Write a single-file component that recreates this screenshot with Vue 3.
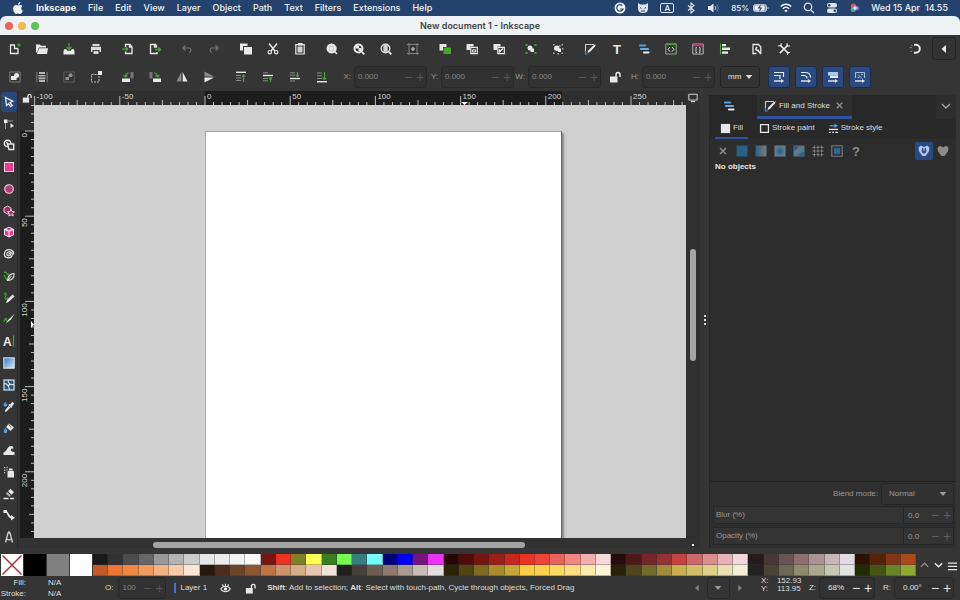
<script setup>
import { ref } from 'vue'

const W = '#e8e8e8'
const G = '#43a832'
const B = '#4f9fd8'
const P = '#e83e8c'

const line = (d, c = W, w = 1) =>
  `<path d="${d}" fill="none" stroke="${c}" stroke-width="${w}"/>`
const fill = (d, c = W) => `<path d="${d}" fill="${c}"/>`

const icons = {
  new: line('M6 2H1.5v8.5h7.5V5.5M5.5 2v3.5H9', W, 1.3) + fill('M9.5 0h1v1.5H12v1h-1.5V4h-1V2.500H8v-1h1.500z', G),
  open: fill('M0 1.500h4l1 1.300h5v1.700H3L1.500 8.500 0 10z') + fill('M3.200 5.300H12L11 11H.8z'),
  save: line('M6 0v6M3.500 4 6 6.500 8.500 4', G, 1.2) + fill('M1.500 6h1.700l1 1.800h3.600l1-1.800h1.700L11.500 8v3.500H.5V8z'),
  print: fill('M2.500 1h7v2h-7zM1 3.700h10V9H9.500V7h-7v2H1zM3.500 8h5v3h-5z', '#dcdcdc'),
  import: line('M3.500 4V1.500H8L10 4v6.500H3.500V8.500M7.500 1.500V4H10', W, 1.3) + line('M0 6.200h5M3.500 4l2.300 2.200L3.500 8.400', G, 1.3),
  export: line('M8 3.500 6.500 1.500h-5v9H8V9M5.500 1.500V4H8', W, 1.3) + line('M6 6.500h5M9.300 4.200l2.200 2.300-2.200 2.300', G, 1.3),
  undo: line('M4.500 2.500 2 5l2.500 2.500M2 5h6c2.500 0 2.500 4 0 4.500', '#757575', 1.2),
  redo: line('M7.500 2.500 10 5 7.500 7.500M10 5H4C1.500 5 1.500 9 4 9.500', '#757575', 1.2),
  copy: fill('M0 .5h7.500V3H3v4.500H0z') + fill('M4 4h8v7.500H4z'),
  cut: line('M2 .5 8 8M10 .5 4 8', W, 1.5) + line('M4.500 9.200a1.700 1.700 0 1 1-3.400 0 1.700 1.700 0 0 1 3.400 0zM10.900 9.200a1.700 1.700 0 1 1-3.400 0 1.700 1.700 0 0 1 3.400 0z', W, 1.2),
  paste: line('M1.800 1.600h8.400v9.400H1.800z', W, 1.2) + fill('M4 0h4.500v2.500H4z') + fill('M3.500 3.500h5V9.500h-5z', '#cfcfcf'),
  zoomSel: fill('M5.500.5a5 5 0 1 0 3 9L10.500 11.500 11.500 10.500 9.700 8.500A5 5 0 0 0 5.500.5z') + line('M3.500 3.500h4v4h-4z', '#c4c4c4', .8),
  zoomDraw: line('M9 9 11.300 11.300', W, 1.8) + line('M5.500 1.500a4 4 0 1 1 0 8 4 4 0 0 1 0-8z', W, 2) + fill('M2.500 2.500h3.500v3H2.500zM5.500 5h3v3h-3z'),
  zoomPage: line('M9 9 11.300 11.300', W, 1.8) + line('M5.500 1.200a4.300 4.300 0 1 1 0 8.600 4.300 4.300 0 0 1 0-8.600z', W, 1.3) + fill('M3.300 2h4.400v7H3.300z', '#d0d0d0'),
  zoomCenter: line('M2 0v12M10 0v12M0 1.500h12M0 10.500h12', '#8a8a8a', .9) + line('M6 4v4M4 6h4', '#cdcdcd', 1.2),
  dup: fill('M.5 1h7v3H4v3.500H.5z') + fill('M4.500 4.500H12V11H4.500z', G),
  clone: fill('M.5 1h7v2.500H4V7H.5z') + line('M4.800 4.300h6.500v6.400H4.800z', W, 1.2) + line('M6.500 9V6.800h3V9z', W, 1),
  unlink: fill('M.5 1h7v2.500H4V7H.5z') + line('M4.800 4.300h6.500v6.400H4.800z', W, 1.2) + line('M6 9.500 9.800 5.500M6.500 6.300V9', W, 1.4),
  group: fill('M.5 1h2v2h-2zM9.500 1h2v2h-2zM.5 9h2v2h-2zM9.500 9h2v2h-2z', G) + '<circle cx="5" cy="5" r="2.500" fill="#e8e8e8"/>' + fill('M5.500 5.500H9V9H5.500z'),
  ungroup: fill('M1 1h1.500v1.500H1zM9.500 1H11v1.500H9.500zM1 9.500h1.500V11H1zM9.500 9.500H11V11H9.500zM7 2.300h1.500v1.500H7zM10 5h1.500v1.500H10zM5.500 10H7v1.500H5.500z', '#a8a8a8') + '<circle cx="4.800" cy="5.300" r="2.700" fill="#e8e8e8"/>' + fill('M6 5.500H9V9H6z'),
  fillStroke: line('M1.500 11V1.500H10', '#c9c9c9', 1.1) + line('M1.500 8v3.200h2', '#3a7fc0', 1.300) + fill('M11.700 1.300 11 3.500 6.200 8.800 3.300 10.300 4.500 7.300 9.800 2z'),
  text: `<text x="6" y="10.500" text-anchor="middle" font-family="Liberation Sans" font-weight="bold" font-size="13" fill="${W}">T</text>`,
  layers: line('M2 2.500h5', B, 2.2).replace('/>', ' stroke-linecap="round"/>') + line('M3 6h7', '#64acdc', 2.2).replace('/>', ' stroke-linecap="round"/>') + line('M6 9.500h4.500', W, 2.2).replace('/>', ' stroke-linecap="round"/>'),
  xml: line('M.8 1h10.400v10H.8z', '#8fae8a', 1) + line('M.5 1.300h11', G, 1.2) + line('M5 4 3 6.300 5 8.600M7 4l2 2.300L7 8.600', W, 1),
  selectors: line('M.8 1h10.400v10H.8z', '#b9b9b9', 1) + fill('M1 .5h10v2.800H1z', '#a84673') + line('M4.800 4.500H4v5h.8M7.200 4.500H8v5h-.8', W, .9),
  align: line('M1.500.5v11', G, 1.1) + fill('M3 1h4v2.200H3zM3 4.600h8v2.400H3zM3 8.500h6v2.300H3z'),
  docprops: line('M5.500 10.500H2V1.500h5.500L9.800 4v6', W, 1.3) + line('M6.300 4.300a1.600 1.600 0 1 0 1.500 2.500M6.500 7 10 11', W, 1.500),
  prefs: line('M2 2 10.500 10.500M10 2 1.800 10.200', W, 1.7) + line('M0 3l3-.5L3.300.3M12 3H9.200L9 .3M12 9.500H9.500V12', W, 1.1),
  snap: line('M5 1.800h1.800a4 4 0 0 1 0 8H5', W, 2) + line('M2 2.500h1.500M.8 4.500h2M1.500 8.500H3', G, 1.2),
  tri: fill('M8 2v8L3.500 6z'),
  selAll: line('M.8 1h10.400v10H.8z', '#7d7d7d', 1) + '<circle cx="7.500" cy="4.500" r="2.500" fill="#e8e8e8"/>' + fill('M2 5h5.500v4H2z'),
  selLayers: line('M.8.8v10.400M11.200.8v10.400', '#7d7d7d', 1) + fill('M3 1h6v2H3zM2.500 4h7v1.600h-7zM2.500 6.600h7v1.600h-7zM3 9h6v2H3z', '#b5b5b5'),
  desel: line('M.8 1h10.400v10H.8z', '#5c5c5c', 1) + '<circle cx="7.500" cy="4.300" r="2" fill="#8f8f8f"/>' + fill('M2.500 6h3.500v3H2.500z', '#8f8f8f'),
  selTouch: line('M1.500 3.500h7.500v7.500H1.500z', '#bdbdbd', 1).replace('/>', ' stroke-dasharray="2 1"/>') + fill('M8 0h4v4H8z'),
  rotL: fill('M0 7.500h8v3.500H0z') + fill('M8.500 1h3v6.500h-3z', '#777') + line('M3.500 5.500c0-2 1-3.300 3.500-3.500M1.500 4l2 2 2-2', G, 1.1),
  rotR: fill('M4 7.500h8v3.500H4z') + fill('M.5 1h3v6.500h-3z', '#777') + line('M8.500 5.500c0-2-1-3.300-3.500-3.500M6.500 4l2 2 2-2', G, 1.1),
  flipH: fill('M5.300 1v9.500H.5z', '#8c8c8c') + fill('M6.700 1v9.500h4.800z'),
  flipV: fill('M1.500.5v5h9.500z', '#8c8c8c') + fill('M1.500 11.500v-5H11z'),
  raiseTop: line('M1 1.300h10', W, 1.4) + line('M1 4.500h5M1 7h5M1 9.500h5', '#8a8a8a', 1) + line('M8.500 11V4M6.800 5.700 8.500 4l1.700 1.700', G, 1.2),
  raise: line('M1 1.800h5M1 7.500h5M1 9.800h5', '#8a8a8a', 1) + line('M1 4.500h10', W, 1.4) + line('M8.500 11V7M7 8l1.500-1.500L10 8', G, 1.2),
  lower: line('M1 1.800h5M1 4.200h5M1 10h5', '#8a8a8a', 1) + line('M1 7.500h10', W, 1.4) + line('M8.500 1v4.500M7 4l1.500 1.500L10 4', G, 1.2),
  lowerBot: line('M1 2h5M1 4.800h5M1 7.500h5', '#8a8a8a', 1) + line('M1 10.700h10', W, 1.4) + line('M8.500 1v7M6.800 6.800 8.500 8.500l1.700-1.700', G, 1.2),
  lock: fill('M1 5.500h7.500v6H1z') + line('M7 6V3.800c0-3 4-3 4 0V6', W, 1.5),
  sc1: line('M1 1.500h9.500V6M1 4.500h6V8', W, 1.2) + line('M1 10h7', W, 1.400) + fill('M8 8v4l3-2z'),
  sc2: line('M1 1.500h4c4 0 5.500 2 5.500 5M1 4.500h3c2 0 3 1.500 3 3', W, 1.200) + line('M1 10h7', W, 1.400) + fill('M8 8v4l3-2z'),
  sc3: fill('M1 1h10v3.500H1z', '#a9cdf0') + fill('M3 4.500h8V7H3z') + line('M1 10h7', W, 1.400) + fill('M8 8v4l3-2z'),
  sc4: line('M1.500 7V1.500h9V7', '#a9bddb', 1) + line('M4 3.500 8 7.500M3.500 6.500h2M7 3.500h2', '#a9bddb', 1) + line('M1 10h7', W, 1.400) + fill('M8 8v4l3-2z'),
  arrow: line('M2.500 1.500 9.800 5.300 7 6.500 9.200 9.500 7.500 10.700 5.500 7.700 3.500 9.500z', W, 1.3),
  node: fill('M1 1.500h3.500V5H1z') + line('M4.500 3H10M2.500 5v6', '#9a9a9a', 1) + fill('M7.500 5 11 8 7.500 10z'),
  shape: line('M4.500 1.200a3.300 3.300 0 1 0 .1 6.600M4.500 1.200c2 0 3.300 1.500 3.300 3.300', W, 1.4) + line('M4.500 5h6.200v5.500H6zM4.500 5 3.500 3', W, 1.4),
  rect: `<rect x="1.500" y="1.500" width="9" height="9" fill="${P}" stroke="#f6cfe0"/>`,
  ellipse: '<circle cx="6" cy="6" r="4.300" fill="#b83a7d" stroke="#f3d3e2" stroke-width="1.100"/>',
  star: '<path d="M4.500 1 8 3v4L4.500 9 1 7V3z" fill="#9c3168" stroke="#f0c8da"/>' + '<path d="m8 4.500 1 2 2.500.2-1.800 1.800.5 2.500L8 9.800 5.800 11l.5-2.500-1.800-1.800L7 6.500z" fill="#9c3168" stroke="#f0dfe7" stroke-width=".9"/>',
  cube: '<path d="M6 .8 11 3v6L6 11.500 1 9V3z" fill="#f7dbe7"/>' + fill('M2 4.200 5.400 5.800v4.200L2 8.400zM10 4.200 6.600 5.800v4.200L10 8.400z', P) + fill('M6 1.800 8.500 3 6 4.300 3.500 3z', '#c22f70'),
  spiral: line('M6 6.500c-.5-1 1.500-1.500 1.500 0 0 2-3.700 2-3.700-.5C3.800 3 9.300 3 9.300 6.500c0 4.500-8 4.500-8-.5C1.300 0 10.800 0 10.800 6.500', W, 1.2),
  pen: line('M1 2.500c3-2 3 4 5 1M1 5l3 5', G, 1.2) + line('M11 3.500c-4 0-6 2-6.500 7C9 10.500 11.500 8 11 3.500zM5 10l3.500-4', W, 1.1),
  pencil: line('M.8 2.500C3-.5 4 2 2.500 4.500S4 8 5 5.500', G, 1.1) + fill('M9.500 2.500 11.500 4.500 5.500 10 3 11l1-3z'),
  callig: line('M.8 8.500C3 4 4 5 3.500 8', G, 1.2) + fill('M11.500 1 8 6.500l-5 4L5 7z'),
  textTool: `<text x="0" y="10.500" font-family="Liberation Sans" font-weight="bold" font-size="12" fill="${W}">A</text>` + line('M10.500.5v11', G, 1.2),
  gradient: '<defs><linearGradient id="gt" x2="1" y2="1"><stop stop-color="#2f79bd"/><stop offset="1" stop-color="#d5eaf8"/></linearGradient></defs><rect x=".8" y=".8" width="10.400" height="10.400" fill="url(#gt)" stroke="#dfe9f0"/>',
  mesh: '<rect x="1" y="1" width="10" height="10" fill="#2d5674" stroke="#cfe3f0" stroke-width="1.200"/>' + line('M1 5c3-2 3 3 5 1s3 1 5-1M5.500 1c-2 3 3 3 .5 5s2 3 0 5', '#cfe3f0', 1.1),
  dropper: fill('M9.500.8 11.300 2.700 8.800 5.300l.5.700-1 1-3-3 1-1 .8.400zM5.500 5 7.300 6.800 3.500 10.500 1.800 11l.5-2z') + fill('M2.300 1c3 3.500 1.800 4.500 0 4.500S-.500 4 2.300 1z', B),
  bucket: fill('M6 1.500 11 5.500 7.500 9 3 5z') + line('M5 1.500 8 5.500', '#444', .8) + fill('M2.500 5.500c3 4 1.800 5.500 0 5.500s-3-1.500 0-5.500z', B),
  tweak: fill('M.5 11V8.500C4 8 4 2 8 2c2 0 3 1.500 2 3-1-1-2.500-.3-2 1.500.5 1.500 3 1.500 3.500 1.500v3z'),
  spray: fill('M4.500 5.500 6 4.500h3.500l1.500 1v6H4.500zM6 2.500h3.500V4H6z') + fill('M1 1h1.300v1.300H1zM3.500.8h1.300v1.300H3.500zM1 3.500h1.300v1.300H1zM3.300 3.300h1.200v1.200H3.300zM1 6h1.200v1.200H1z', '#bdbdbd'),
  eraser: fill('M7.500.8 11 4.300 8.500 6.800 5 3.300z') + fill('M4.300 4 7.800 7.500 6.300 9 2.800 5.500z', '#b0b0b0') + line('M.5 10.500h5M7 10.500h4', W, 1.3),
  connector: line('M2 2.500C6 2 4 8.500 9 8.500', W, 1.6) + fill('M.5 1h3.500v3H.5zM8 6l4 2.700L8 11.500z'),
  measure: line('M2.500 11.500 5 2h2l2.500 9.500M3.500 8c1.500 1 3.500 1 5 0M6 0v2', '#d0d0d0', 1.3),
  monitor: line('M1 1.500h10v7H1z', '#cfcfcf', 1.2) + fill('M3.500 9.500h5V11h-5z', '#cfcfcf'),
  strokePaint: line('M1.700 1.700h8.600v8.600H1.700z', W, 1.4),
  fillBox: fill('M1 1h10v10H1z'),
  strokeStyle: line('M2 3h7', B, 1.4) + fill('M7 .5 11 3 7 5.500z', B) + line('M1 7h10', W, 1.4) + line('M1 10.200h2M4.500 10.200h2M8 10.200h3', W, 1.4),
  none: line('M3 3l6 6M9 3l-6 6', '#8d8d8d', 1.5),
  flat: fill('M.5.5h11v11H.5z', '#2b5f83'),
  linear: '<defs><linearGradient id="gl"><stop stop-color="#2b5f83"/><stop offset="1" stop-color="#757d82"/></linearGradient></defs><rect x=".5" y=".5" width="11" height="11" fill="url(#gl)"/>',
  radial: '<defs><radialGradient id="gr"><stop offset=".2" stop-color="#2a678f"/><stop offset="1" stop-color="#69808e"/></radialGradient></defs><rect x=".5" y=".5" width="11" height="11" fill="url(#gr)"/>',
  meshFill: fill('M.5.5h11v11H.5z', '#5d788a') + fill('M.5.5h5C5 4 4 5 .5 5.500zM11.500 11.500H5c1-3 3-4.500 6.500-4.500z', '#2d6288'),
  pattern: line('M.5 2.500h11M.5 6h11M.5 9.500h11M2.500.5v11M6 .5v11M9.500.5v11', '#858585', 1.1).replace('/>', ' stroke-dasharray="3 1"/>'),
  swatch: line('M.8.8h10.400v10.400H.8z', '#6f7d86', 1.100) + fill('M2.800 2.800h6.400v6.400H2.800z', '#2b678f'),
  unknown: '<text x="6" y="10.500" text-anchor="middle" font-family="Liberation Sans" font-weight="bold" font-size="13" fill="#8d8d8d">?</text>',
  ruleNon: fill('M3.500.8C6 2.500 6 2.500 8.500.8 12 1 11.800 4.500 10.500 7L7.500 11h-3L1.500 7C.200 4.500 0 1 3.500.8z', '#b8c8e4') + fill('M4.300 3h3.400c1.200 2.500.8 5.500-1.700 5.500S3.100 5.500 4.300 3z', '#2a4a8a') + fill('M5.400 3h1.200v3H5.400z', '#b8c8e4'),
  ruleEven: fill('M3.500 1C6 2.500 6 2.500 8.500 1 12 1 12 4.500 10.500 7L7.500 11h-3L1.500 7C0 4.500 0 1 3.500 1z', '#8b8b8b'),
  eye: line('M.8 6.500c2.500-4 8-4 10.400 0-2.500 4-8 4-10.400 0zM2.500 1.500l1.200 2M6 .8v2.500M9.500 1.500l-1.200 2', W, 1.2) + '<circle cx="6" cy="6.500" r="1.800" fill="#e8e8e8"/>',
  gramm: '<circle cx="6" cy="6" r="5.500" fill="#f0f3f7"/>' + line('M8.300 3.700A3.200 3.200 0 1 0 9 7H6.300', '#24426b', 1.2),
  cat: fill('M1 1l2.500 1.500h5L11 1v5.500c0 3-2 4.500-5 4.500S1 9.500 1 6.500z', '#dfe5ee') + line('M3 5.500l1.500 1M9 5.500l-1.500 1M4 9h4', '#24426b', 1),
  bt: line('M3 3.500 9 8.500 6 11V1l3 2.500-6 5', '#dfe5ee', 1.1),
  vol: fill('M0 4h2.500L5.500 1.500v9L2.500 8H0z', '#e6ebf2') + line('M7 4c1 1.300 1 2.700 0 4', '#c5cedb', 1) + line('M9 2.500c1.500 2 1.500 5 0 7', '#7f92ae', 1),
  wifi: line('M.8 4.500c3-3 7.400-3 10.400 0M2.800 6.700c2-1.800 4.400-1.800 6.400 0', '#eef1f6', 1.500) + fill('M4.300 8.500c1-1 2.400-1 3.400 0L6 10.500z', '#eef1f6'),
  search: line('M5 1.200a3.700 3.700 0 1 1 0 7.400 3.700 3.700 0 0 1 0-7.400zM7.700 7.800 11 11', '#dfe5ee', 1.2),
  control: '<rect x="1" y="1" width="10" height="4.500" rx="2.200" fill="#dfe5ee"/><circle cx="3.300" cy="3.200" r="1.200" fill="#24426b"/>' + '<rect x="1" y="6.500" width="10" height="4.500" rx="2.200" fill="#dfe5ee"/><circle cx="8.700" cy="8.700" r="1.200" fill="#24426b"/>',
  siri: '<circle cx="6" cy="6" r="5.200" fill="#333b58"/><circle cx="4.500" cy="4.200" r="2.700" fill="#d6567c"/><circle cx="4.200" cy="7.500" r="2.600" fill="#4aa3b8"/><circle cx="8" cy="6.300" r="2.300" fill="#6c7fd8"/><circle cx="6" cy="6" r="1.700" fill="#f1f5fb"/>',
  down: line('M2 4l4 4 4-4', '#a8a8a8', 1.3),
  triDown: fill('M1 3h10L6 9z', '#dedede'),
  triGrey: fill('M1 3h10L6 9z', '#9b9b9b')
}

const menus = ['File', 'Edit', 'View', 'Layer', 'Object', 'Path', 'Text', 'Filters', 'Extensions', 'Help']

const commandGroups = [
  ['new', 'open', 'save', 'print'],
  ['import', 'export'],
  ['undo', 'redo'],
  ['copy', 'cut', 'paste'],
  ['zoomSel', 'zoomDraw', 'zoomPage', 'zoomCenter'],
  ['dup', 'clone', 'unlink'],
  ['group', 'ungroup'],
  ['fillStroke', 'text', 'layers', 'xml', 'selectors', 'align'],
  ['docprops', 'prefs']
]
const selectorGroups = [
  ['selAll', 'selLayers', 'desel', 'selTouch'],
  ['rotL', 'rotR', 'flipH', 'flipV'],
  ['raiseTop', 'raise', 'lower', 'lowerBot']
]
const scaleToggles = ['sc1', 'sc2', 'sc3', 'sc4']
const tools = [
  'arrow', 'node', 'shape', 'rect', 'ellipse', 'star', 'cube', 'spiral', 'pen', 'pencil', 'callig',
  'textTool', 'gradient', 'mesh', 'dropper', 'bucket', 'tweak', 'spray', 'eraser', 'connector', 'measure'
]
const paints = ['none', 'flat', 'linear', 'radial', 'meshFill', 'pattern', 'swatch', 'unknown']

const coords = ref({ X: '0.000', Y: '0.000', W: '0.000', H: '0.000' })
const unit = ref('mm')
const activeTool = ref('arrow')
const blend = ref('Normal')
const blur = ref('0.0')
const opacity = ref('0.0')
const layerOpacity = ref('100')
const zoom = ref('68%')
const rotation = ref('0.00°')

// Ruler ticks every 5 units; 50 units span 85.2 px at this zoom.
const STEP = 8.52
const makeTicks = (origin, from, to) => {
  const out = []
  for (let i = from; i <= to; i++) {
    out.push({
      pos: origin + i * STEP,
      size: i % 10 === 0 ? 9 : i % 5 === 0 ? 5 : 3,
      label: i % 10 === 0 ? String(i * 5) : ''
    })
  }
  return out
}
const hTicks = makeTicks(171, -20, 59)
const vTicks = makeTicks(26, -3, 49)

const row1 = '1a1a1a 333333 4d4d4d 666666 999999 b3b3b3 cccccc e6e6e6 ececec f2f2f2 f9f9f9 7a1410 ea3323 808026 ffff54 377d22 75fb4c 367e7f 75fbfd 00007b 0000f5 75147c ea33f7 280503 500c08 75160f 9c1f17 c3281c ea3323 ec4637 e8635b ef8683 f2aeab f8d9da 260c0c 4e191a 732728 963233 c74241 cd6868 d98f8e e5b3b5 f0d8dc 241c1c 483737 6c5353 916f6f ac9393 c8b7b7 e3dbe3 2b1100 552208 803713 a84a1b'.split(' ')
const row2 = 'c55a28 ec7434 ef8843 f09b5b f3b384 f6cbac fae5d6 28190d 4b2c1a 6c4529 8b5733 bc7547 cb946c d6ab88 e3c5b0 f1e2d8 20211d 483e3a 6c5d53 8e7a6f a99a92 c6bdb6 e0dedc 2a2305 4f4412 7e6a20 a98d2a c4a63a f8cd46 f9d14f fad862 fbde7f fbeaae fdf4d5 28220b 50451a 73692b a08c3a c6b14e d2c066 ddd088 e8e0b0 f2eed8 24221c 484537 6c6753 8f8b6f aaa890 c6c6b5 e2e5df 222b04 445514 688426 8fa833'.split(' ')
const swatches = [...row1, ...row2]
</script>

<template>
  <div class="screen">
    <nav class="menubar">
      <svg class="apple" viewBox="0 0 24 24"><path fill="#f2f5f9" d="M12.152 6.896c-.948 0-2.415-1.078-3.960-1.040-2.040.027-3.910 1.183-4.961 3.014-2.117 3.675-.546 9.103 1.519 12.090 1.013 1.454 2.208 3.090 3.792 3.039 1.520-.065 2.090-.987 3.935-.987 1.831 0 2.350.987 3.960.948 1.637-.026 2.676-1.480 3.676-2.948 1.156-1.688 1.636-3.325 1.662-3.415-.039-.013-3.182-1.221-3.220-4.857-.026-3.040 2.480-4.494 2.597-4.559-1.429-2.090-3.623-2.324-4.390-2.376-2-.156-3.675 1.090-4.610 1.090zM15.530 3.830c.843-1.012 1.400-2.427 1.245-3.830-1.207.052-2.662.805-3.532 1.818-.780.896-1.454 2.338-1.273 3.714 1.338.104 2.715-.688 3.559-1.701"/></svg>
      <a href="#" class="appname">Inkscape</a>
      <a v-for="m in menus" :key="m" href="#">{{ m }}</a>
      <div class="tray">
        <svg class="ic" viewBox="0 0 12 12" v-html="icons.gramm" />
        <svg class="ic" viewBox="0 0 12 12" v-html="icons.cat" />
        <span class="lang">A</span>
        <svg class="ic" viewBox="0 0 12 12" v-html="icons.bt" />
        <svg class="ic" viewBox="0 0 12 12" v-html="icons.vol" />
        <span class="battery">85%
          <svg class="batt" viewBox="0 0 16 8">
            <rect x=".5" y=".5" width="13" height="7" rx="2" fill="#8b9bb4" stroke="#b9c4d4" />
            <rect x="1.500" y="1.500" width="10" height="5" rx="1" fill="#eef1f6" />
            <path d="M8 0 4.500 4.500H7L6 8l3.500-4.500H7z" fill="#24426b" />
            <path d="M15 3v2" stroke="#b9c4d4" />
          </svg>
        </span>
        <svg class="ic wifi" viewBox="0 0 12 12" v-html="icons.wifi" />
        <svg class="ic" viewBox="0 0 12 12" v-html="icons.search" />
        <svg class="ic" viewBox="0 0 12 12" v-html="icons.control" />
        <svg class="ic" viewBox="0 0 12 12" v-html="icons.siri" />
        <span class="clock">Wed 15 Apr&nbsp; 14.55</span>
      </div>
    </nav>

    <header class="titlebar">
      <div class="lights"><i class="red" /><i class="amber" /><i class="green" /></div>
      <h1>New document 1 - Inkscape</h1>
      <div class="lights" />
    </header>

    <div class="app">
      <div class="toolbar">
        <div v-for="(g, i) in commandGroups" :key="i" class="group">
          <button v-for="n in g" :key="n" class="tb" :aria-label="n"><svg class="ic" viewBox="0 0 12 12" v-html="icons[n]" /></button>
        </div>
        <div class="right">
          <button class="tb" aria-label="Snap"><svg class="ic" viewBox="0 0 12 12" v-html="icons.snap" /></button>
          <button class="boxed" aria-label="Snap options"><svg class="ic" viewBox="0 0 12 12" v-html="icons.tri" /></button>
        </div>
      </div>

      <div class="toolbar">
        <div v-for="(g, i) in selectorGroups" :key="i" class="group">
          <button v-for="n in g" :key="n" class="tb" :aria-label="n"><svg class="ic" viewBox="0 0 12 12" v-html="icons[n]" /></button>
        </div>
        <div class="coords">
          <template v-for="(v, k) in coords" :key="k">
            <button v-if="k === 'H'" class="tb" aria-label="Lock ratio"><svg class="ic" viewBox="0 0 12 12" v-html="icons.lock" /></button>
            <label :for="'c' + k">{{ k }}:</label>
            <div class="spin dim">
              <input :id="'c' + k" v-model="coords[k]" type="text">
              <button aria-label="Decrease">−</button><button aria-label="Increase">+</button>
            </div>
          </template>
        </div>
        <div class="unit">
          <select v-model="unit" aria-label="Unit"><option>mm</option><option>px</option><option>in</option></select>
          <svg class="caret" viewBox="0 0 12 12" v-html="icons.triDown" />
        </div>
        <div class="toggles">
          <button v-for="n in scaleToggles" :key="n" :aria-label="n"><svg class="ic" viewBox="0 0 12 12" v-html="icons[n]" /></button>
        </div>
      </div>

      <main class="work">
        <div class="toolbox">
          <button v-for="t in tools" :key="t" :class="{ active: t === activeTool }" :aria-label="t" @click="activeTool = t">
            <svg class="ic" viewBox="0 0 12 12" v-html="icons[t]" />
          </button>
        </div>

        <section class="doc">
          <button class="corner" aria-label="Lock guides"><svg viewBox="0 0 12 12" v-html="icons.lock" /></button>
          <svg class="hruler">
            <rect x="171" y="0" width="357" height="14" fill="#1d1d1d" />
            <template v-for="t in hTicks" :key="t.pos">
              <line :x1="t.pos" :x2="t.pos" :y1="14 - t.size" y2="14" stroke="#b8b8b8" />
              <text v-if="t.label" :x="t.pos + 2" y="8">{{ t.label }}</text>
            </template>
            <path d="M427 11h7l-3.500 3z" fill="#fff" />
          </svg>
          <button class="corner" aria-label="Display mode"><svg viewBox="0 0 12 12" v-html="icons.monitor" /></button>

          <svg class="vruler">
            <rect x="0" y="26" width="14" height="600" fill="#1d1d1d" />
            <template v-for="t in vTicks" :key="t.pos">
              <line :y1="t.pos" :y2="t.pos" :x1="14 - t.size" x2="14" stroke="#b8b8b8" />
              <text v-if="t.label" :transform="`translate(7 ${t.pos + 2}) rotate(-90)`" text-anchor="end">{{ t.label }}</text>
            </template>
            <path d="M11 216v7l3-3.500z" fill="#fff" />
          </svg>
          <div class="canvas"><div class="page" /></div>
          <div class="vscroll"><i class="before" /><i class="thumb" /><i class="after" /></div>

          <div />
          <div class="hscroll"><i class="before" /><i class="thumb" /><i class="after" /></div>
          <div class="cms"><i /></div>
        </section>

        <div class="divider"><i /><i /><i /></div>

        <aside class="panel">
          <div class="tabs">
            <button class="tab small" aria-label="Layers and Objects"><svg class="ic" viewBox="0 0 12 12" v-html="icons.layers" /></button>
            <button class="tab active"><svg class="ic" viewBox="0 0 12 12" v-html="icons.fillStroke" />Fill and Stroke<svg class="ic close" viewBox="0 0 12 12" v-html="icons.none" /></button>
            <button class="tab more" aria-label="More"><svg class="ic" viewBox="0 0 12 12" v-html="icons.down" /></button>
          </div>
          <div class="subtabs">
            <button class="active"><svg class="ic" viewBox="0 0 12 12" v-html="icons.fillBox" />Fill</button>
            <button><svg class="ic" viewBox="0 0 12 12" v-html="icons.strokePaint" />Stroke paint</button>
            <button><svg class="ic" viewBox="0 0 12 12" v-html="icons.strokeStyle" />Stroke style</button>
          </div>
          <div class="content">
            <div class="paints">
              <button v-for="p in paints" :key="p" :aria-label="p"><svg class="ic" viewBox="0 0 12 12" v-html="icons[p]" /></button>
              <button class="rule on" aria-label="Non-zero rule"><svg class="ic" viewBox="0 0 12 12" v-html="icons.ruleNon" /></button>
              <button class="rule" aria-label="Even-odd rule"><svg class="ic" viewBox="0 0 12 12" v-html="icons.ruleEven" /></button>
            </div>
            <p>No objects</p>
          </div>
          <div class="blend">
            <label for="blend">Blend mode:</label>
            <div class="drop">
              <select id="blend" v-model="blend"><option>Normal</option><option>Multiply</option></select>
              <svg class="caret" viewBox="0 0 12 12" v-html="icons.triGrey" />
            </div>
          </div>
          <div class="slide">
            <label for="blur">Blur (%)</label>
            <input id="blur" v-model="blur" type="text"><button aria-label="Decrease">−</button><button aria-label="Increase">+</button>
          </div>
          <div class="slide">
            <label for="opac">Opacity (%)</label>
            <input id="opac" v-model="opacity" type="text"><button aria-label="Decrease">−</button><button aria-label="Increase">+</button>
          </div>
        </aside>
      </main>

      <div class="palette">
        <button class="big none" aria-label="None"><svg viewBox="0 0 22 22"><path d="M1.500 1.500l19 19M20.500 1.500l-19 19" stroke="#a8323c" stroke-width="1.500" /></svg></button>
        <button class="big black" aria-label="Black" />
        <button class="big gray" aria-label="Gray" />
        <button class="big white" aria-label="White" />
        <div class="swatches">
          <button v-for="(c, i) in swatches" :key="i" :aria-label="'#' + c" :style="{ backgroundColor: '#' + c }" />
        </div>
        <div class="palnav">
          <svg viewBox="0 0 12 12"><path d="M2 8l4-4 4 4" fill="none" stroke="#8a8a8a" stroke-width="1.500" /></svg>
          <svg viewBox="0 0 12 12"><path d="M2 4l4 4 4-4" fill="none" stroke="#e8e8e8" stroke-width="1.600" /></svg>
          <svg viewBox="0 0 12 12"><path d="M1 4h10M1 7.500h10M1 11h10" stroke="#e8e8e8" stroke-width="1.400" /></svg>
        </div>
      </div>

      <footer class="status">
        <dl class="style">
          <dt>Fill:</dt><dd>N/A</dd>
          <dt>Stroke:</dt><dd>N/A</dd>
        </dl>
        <label for="lo">O:</label>
        <div class="spin dim lo">
          <input id="lo" v-model="layerOpacity" type="text"><button aria-label="Decrease">−</button><button aria-label="Increase">+</button>
        </div>
        <button class="layer">Layer 1</button>
        <button class="st" aria-label="Visibility"><svg class="ic" viewBox="0 0 12 12" v-html="icons.eye" /></button>
        <button class="st" aria-label="Lock layer"><svg class="ic" viewBox="0 0 12 12" v-html="icons.lock" /></button>
        <p class="msg"><b>Shift</b>: Add to selection; <b>Alt</b>: Select with touch-path, Cycle through objects, Forced Drag</p>
        <div class="pages">
          <svg viewBox="0 0 12 12"><path d="M8.500 1v10L3 6z" fill="#808080" /></svg>
          <button aria-label="Pages"><svg viewBox="0 0 12 12" v-html="icons.triGrey" /></button>
          <svg viewBox="0 0 12 12"><path d="M3.500 1v10L9 6z" fill="#808080" /></svg>
        </div>
        <dl class="xy"><dt>X:</dt><dd>152.93</dd><dt>Y:</dt><dd>113.95</dd></dl>
        <label for="zm">Z:</label>
        <div class="spin lit zm">
          <input id="zm" v-model="zoom" type="text"><button aria-label="Zoom out">−</button><button aria-label="Zoom in">+</button>
        </div>
        <label for="rt">R:</label>
        <div class="spin lit rt">
          <input id="rt" v-model="rotation" type="text"><button aria-label="Rotate left">−</button><button aria-label="Rotate right">+</button>
        </div>
      </footer>
    </div>
  </div>
</template>

<style>
body { background: #24426b; }
</style>

<style scoped>
* { box-sizing: border-box; }
.screen {
  display: flex;
  flex-direction: column;
  min-height: 100vh;
  background: #24426b;
  color: #dedede;
  font: 8px/10px "Liberation Sans", Arial, sans-serif;
}
button, input, select {
  margin: 0;
  padding: 0;
  border: 0;
  background: none;
  color: inherit;
  font: inherit;
  appearance: none;
  outline: none;
}
button { display: flex; align-items: center; justify-content: center; }
p, dl, dd, h1 { margin: 0; }
i { display: block; }
svg { display: block; }
.ic { width: 12px; height: 12px; flex: none; }

.menubar {
  display: flex;
  align-items: center;
  gap: 12px;
  height: 16px;
  padding: 0 12px;
  font: 500 9px/16px Inter, "Liberation Sans", sans-serif;
}
.menubar a { color: #eef2f7; text-decoration: none; }
.menubar .appname { font-weight: 700; }
.apple { width: 12px; height: 12px; }
.tray { display: flex; align-items: center; gap: 11px; margin-left: auto; color: #eef2f7; }
.lang { width: 14px; height: 10px; border: 1px solid #dfe5ee; border-radius: 2px; font-size: 8px; line-height: 8px; text-align: center; }
.battery { display: flex; align-items: center; gap: 4px; font-size: 8px; }
.batt { width: 16px; height: 8px; }
.clock { margin-left: -1px; font-size: 9px; }

.titlebar {
  display: flex;
  align-items: center;
  justify-content: space-between;
  height: 19px;
  padding: 0 5px;
  border-radius: 6px 6px 0 0;
  background: #eff2f5;
}
.titlebar h1 { color: #444; font: 600 9px/19px Inter, "Liberation Sans", sans-serif; }
.lights { display: flex; gap: 5px; width: 40px; }
.lights i { width: 8px; height: 8px; border-radius: 50%; }
.red { background: #ea6559; }
.amber { background: #f0b94b; }
.green { background: #5dc351; }

.app { display: flex; flex: 1; flex-direction: column; background: #353535; }
.toolbar { display: flex; align-items: center; gap: 5px; height: 28px; padding: 0 4px 0 1px; }
.group { display: flex; }
.tb { width: 27px; height: 24px; }
.toolbar .right { display: flex; gap: 4px; margin-left: auto; }
.boxed { width: 24px; height: 23px; border: 1px solid #242424; border-radius: 3px; background: #333; }
.coords { display: flex; align-items: center; color: #9b9b9b; }
.coords label { width: 14px; padding-right: 3px; text-align: right; }
.coords .spin { width: 73px; }
.spin { display: flex; align-items: center; height: 22px; border: 1px solid #282828; border-radius: 3px; background: #313131; }
.spin input { flex: 1; min-width: 0; width: 0; padding-left: 3px; }
.spin button { width: 12px; height: 20px; font-size: 14px; line-height: 14px; }
.dim { color: #858585; }
.dim button { color: #565656; }
.lit { border-color: #292929; color: #e4e4e4; }
.unit { position: relative; width: 40px; }
.unit select { width: 100%; height: 22px; padding-left: 7px; border: 1px solid #242424; border-radius: 3px; background: #333; color: #e4e4e4; }
.caret { position: absolute; top: 50%; right: 7px; width: 8px; height: 8px; margin-top: -4px; pointer-events: none; }
.toggles { display: flex; gap: 5px; margin-left: 3px; }
.toggles button { width: 22px; height: 22px; border: 1px solid #1b2c4c; border-radius: 3px; background: #2b4a81; }

.work { display: flex; flex: 1; min-height: 0; }
.toolbox { display: grid; grid-auto-rows: 1fr; width: 18px; border-right: 1px solid #292929; }
.toolbox button { min-height: 0; border-radius: 3px; }
.toolbox button.active { margin: 1px 0 1px 1px; background: #29477c; }
.doc {
  display: grid;
  flex: 1;
  grid-template-columns: 14px 1fr 14px;
  grid-template-rows: 14px 1fr 10px;
  min-width: 0;
  padding-left: 2px;
  background: #323232;
}
.corner svg { width: 10px; height: 10px; }
.hruler, .vruler { width: 100%; height: 100%; overflow: hidden; background: #2f2f2f; }
.hruler text, .vruler text { fill: #d4d4d4; font-size: 8px; }
.canvas { display: flex; min-width: 0; min-height: 0; overflow: hidden; padding: 26px 0 0 171px; background: #d0d0d0; }
.page { width: 357px; background: #fff; border: 1px solid #a6a6a6; border-right-color: #666; border-bottom: 0; box-shadow: 2px 2px 2px #8a8a8a; }
.vscroll { display: flex; flex-direction: column; align-items: center; background: #303030; }
.hscroll { display: flex; align-items: flex-end; }
.thumb { border-radius: 3px; background: #a3a3a3; }
.vscroll .thumb { flex: 112; width: 6px; }
.vscroll .before { flex: 144; }
.vscroll .after { flex: 177; }
.hscroll .thumb { flex: 372; height: 6px; }
.hscroll .before { flex: 119; }
.hscroll .after { flex: 161; }
.cms { display: flex; align-items: flex-end; justify-content: center; padding-bottom: 2px; }
.cms i { width: 2px; height: 2px; background: #f0f0f0; }
.divider { display: flex; flex-direction: column; align-items: center; justify-content: center; gap: 2px; width: 9px; }
.divider i { width: 2px; height: 2px; background: #e0e0e0; }

.panel { display: flex; flex-direction: column; width: 247px; margin: 4px 4px 0 0; border-left: 1px solid #262626; background: #2f2f2f; color: #9b9b9b; }
.tabs { display: flex; height: 24px; background: #272727; }
.tab { gap: 3px; border-bottom: 3px solid transparent; color: #dedede; }
.tab.small { width: 38px; margin-right: 9px; }
.tab.active { width: 95px; border-color: #2e539b; background: #2e2e2e; }
.tab .close { width: 11px; height: 11px; margin-left: 1px; }
.tab.more { width: 20px; margin-left: auto; background: #2e2e2e; }
.subtabs { display: flex; gap: 9px; height: 20px; padding-left: 5px; background: #292929; }
.subtabs button { gap: 2px; padding: 0 2px; border-bottom: 2px solid transparent; color: #dcdcdc; }
.subtabs .active { width: 33px; border-color: #2e539b; }
.subtabs .ic { width: 11px; height: 11px; }
.content { flex: 1; padding: 3px 4px 0 3px; border-bottom: 1px solid #222; background: #2d2d2d; }
.paints { display: flex; height: 18px; }
.paints button { width: 19px; }
.paints .on { width: 18px; margin-left: auto; border-radius: 2px; background: #2a4a86; }
.content p { padding: 2px; color: #e6e6e6; font-weight: 700; }
.blend { display: flex; align-items: center; justify-content: flex-end; gap: 3px; height: 24px; padding-right: 2px; }
.drop { position: relative; width: 73px; }
.drop select { width: 100%; height: 22px; padding-left: 7px; border: 1px solid #262626; border-radius: 3px; background: #313131; }
.slide { display: flex; align-items: center; height: 18px; margin: 0 2px 3px 3px; border: 1px solid #262626; background: #333; }
.slide label { flex: 1; padding-left: 2px; }
.slide input { width: 26px; height: 16px; padding-left: 4px; border-left: 1px solid #262626; }
.slide button { width: 12px; height: 16px; color: #5e5e5e; font-size: 14px; line-height: 14px; }

.palette { display: flex; height: 28px; padding: 6px 2px 0 1px; }
.big { width: 22px; height: 22px; margin-right: 1px; }
.big svg { width: 22px; height: 22px; }
.none, .white { background: #fff; }
.black { background: #000; }
.gray { background: #808080; }
.swatches { display: grid; flex: 1; grid-template-columns: repeat(54, 1fr); grid-template-rows: 1fr 1fr; min-width: 0; }
.swatches button { min-width: 0; border-right: 1px solid #3335; border-bottom: 1px solid #3335; }
.palnav { display: flex; align-items: center; gap: 3px; padding-left: 3px; }
.palnav svg { width: 11px; height: 12px; }

.status { display: flex; align-items: center; height: 24px; padding-right: 6px; overflow: hidden; }
.status label { padding-right: 3px; }
.style { display: grid; grid-template-columns: 26px 1fr; column-gap: 22px; row-gap: 1px; width: 105px; }
.style dt { text-align: right; }
.status .lo { width: 48px; margin-left: 2px; }
.layer { margin-left: 8px; padding-left: 4px; border-left: 2px solid #4470d8; }
.st { width: 25px; height: 20px; }
.layer + .st { margin-left: 6px; }
.st .ic { width: 11px; height: 11px; }
.msg { flex: 1; padding-left: 4px; white-space: nowrap; }
.pages { display: flex; align-items: center; gap: 6px; }
.pages svg { width: 8px; height: 8px; }
.pages button { width: 23px; height: 22px; border: 1px solid #292929; border-radius: 3px; }
.xy { display: grid; grid-template-columns: 12px 34px; width: 48px; margin-left: 17px; line-height: 8px; padding-bottom: 6px; }
.xy dd { padding-left: 4px; }
.status .zm { width: 56px; margin-right: 8px; }
.status .rt { width: 60px; }
.lit input { padding-left: 8px; }
</style>
